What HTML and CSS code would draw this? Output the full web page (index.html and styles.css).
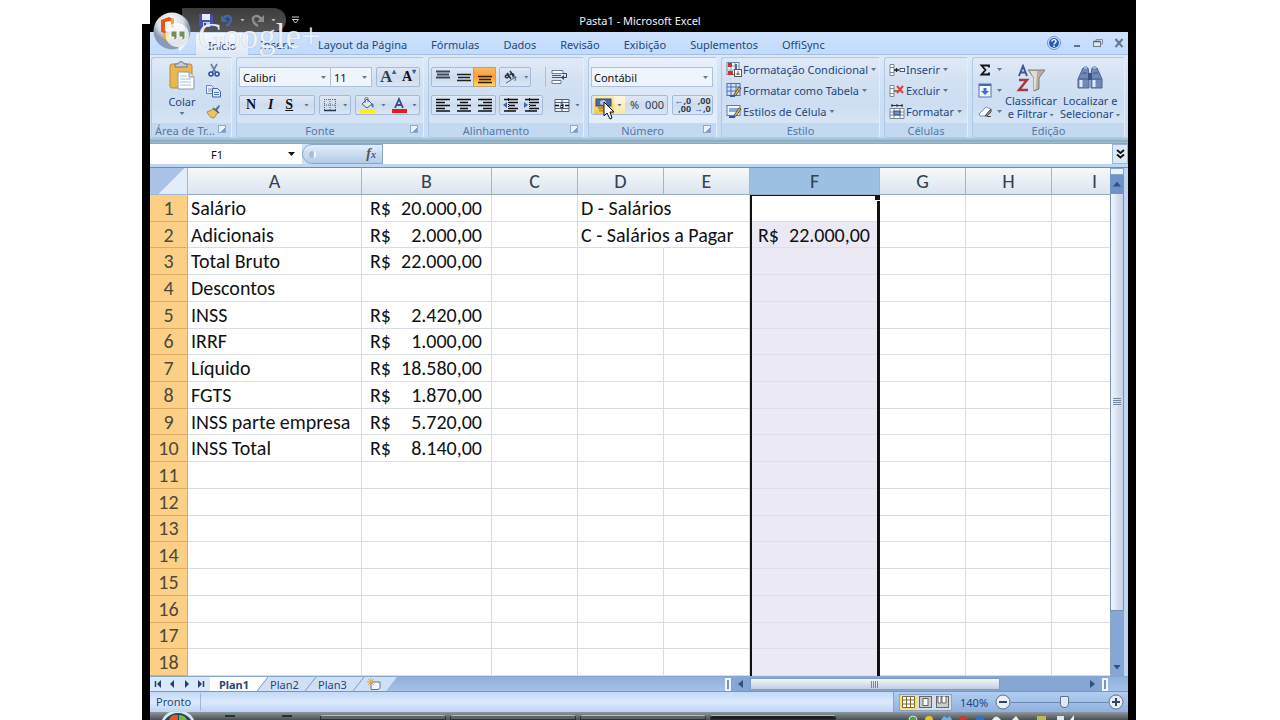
FILE: index.html
```html
<!DOCTYPE html>
<html lang="pt-BR">
<head>
<meta charset="utf-8">
<title>Pasta1 - Microsoft Excel</title>
<link rel="stylesheet" href="styles.css">
</head>
<body>
<div class="screen">
  <header class="titlebar">
    <div class="quick">
      <button class="plain" aria-label="Salvar"><svg width="16" height="16" viewBox="0 0 16 16"><path d="M1 2h12l2 2v11H1z" fill="#4b4fae"/><path d="M4 2h8v6H4z" fill="#e6eaff"/><path d="M5 10h7v5H5z" fill="#c8cdf0"/><path d="M6 11h2v3H6z" fill="#3a3d8c"/></svg></button>
      <button class="plain" aria-label="Desfazer"><svg width="16" height="16" viewBox="0 0 16 16"><path d="M4 7c3-5 9-3 8 1-.5 3-3 5-5 6" fill="none" stroke="#3f68ad" stroke-width="2.5"/><path d="M2 3v7h7z" fill="#3f68ad"/></svg></button>
      <span class="arrow pale"></span>
      <button class="plain" aria-label="Refazer"><svg width="16" height="16" viewBox="0 0 16 16"><path d="M11 7C8 2 2 4 3 8c.5 3 3 5 5 6" fill="none" stroke="#8d8d8d" stroke-width="2.5"/><path d="M14 3v7H7z" fill="#8d8d8d"/></svg></button>
      <span class="arrow pale"></span>
    </div>
    <button class="plain more" aria-label="Personalizar"><svg width="7" height="8" viewBox="0 0 7 8"><path d="M0 1h7" stroke="#ccc"/><path d="M.5 3.500h6L3.500 7z" fill="none" stroke="#ccc"/></svg></button>
    <h1 class="title">Pasta1 - Microsoft Excel</h1>
  </header>

  <button class="plain office" aria-label="Botão Office"><svg width="42" height="46" viewBox="0 0 42 46">
    <defs><radialGradient id="orb" cx=".45" cy=".25"><stop offset="0" stop-color="#fff"/><stop offset=".7" stop-color="#d7dbe3"/><stop offset="1" stop-color="#8c9bb4"/></radialGradient></defs>
    <circle cx="20" cy="20" r="18.500" fill="url(#orb)"/>
    <path d="M9 9l8-3 5 2v8l-3 1v-7l-6 1v9l5 1v3l-9-3z" fill="#e2571c"/><path d="M19 7l3 1v7h-3z" fill="#f5a03a"/><path d="M11 22h6v9l-6-4z" fill="#f0ad25"/>
    <path d="M25 12a12 12 0 0 1 12 12c0 9-6 11-9 17l-2-5a12 12 0 0 1-1-24z" fill="#fff" opacity=".75"/>
    <path d="M19 20h6v7l-3 3v-4h-3zM27 20h6v7l-3 3v-4h-3z" fill="#6f8f5b" stroke="#eef3ea"/>
  </svg></button>
  <div class="watermark">Google+</div>

  <div class="window">
    <nav class="tabs">
      <a class="tab active" href="#">Início</a><a class="tab" href="#">Inserir</a><a class="tab" href="#">Layout da Página</a><a class="tab" href="#">Fórmulas</a><a class="tab" href="#">Dados</a><a class="tab" href="#">Revisão</a><a class="tab" href="#">Exibição</a><a class="tab" href="#">Suplementos</a><a class="tab" href="#">OffiSync</a>
      <div class="winbtns">
        <button class="plain" aria-label="Ajuda"><svg width="14" height="14" viewBox="0 0 14 14"><circle cx="7" cy="7" r="6.500" fill="#dce9fb" stroke="#6b8fd0"/><circle cx="7" cy="7" r="5" fill="#2a5cc0"/><path d="M5 5.500c0-2.500 4-2.500 4 0C9 7 7 7 7 8.500M7 9.500V11" fill="none" stroke="#fff" stroke-width="1.400"/></svg></button>
        <button class="plain" aria-label="Minimizar"><svg width="10" height="10" viewBox="0 0 10 10"><path d="M2 8h6" stroke="#5f7186" stroke-width="2"/></svg></button>
        <button class="plain" aria-label="Restaurar"><svg width="10" height="10" viewBox="0 0 10 10"><path d="M3 3V1.500h6.500V6H8" fill="none" stroke="#8390a0"/><rect x=".5" y="3.500" width="7" height="5" fill="#dfe7ee" stroke="#6d7a88"/><path d="M1 3.500h6" stroke="#566" stroke-width="1.500"/></svg></button>
        <button class="plain" aria-label="Fechar"><svg width="10" height="10" viewBox="0 0 10 10"><path d="M1.500 1l7 8M8.500 1l-7 8" stroke="#66788c" stroke-width="2"/></svg></button>
      </div>
    </nav>

    <div class="ribbon">
      <section class="group g-clip">
        <div class="body clip">
          <button class="plain big">
            <svg width="28" height="30" viewBox="0 0 28 30"><rect x="2" y="3" width="22" height="24" rx="2" fill="#eab650" stroke="#b98a3b"/><path d="M7 6V3h3c0-3 6-3 6 0h3v3z" fill="#c9ced6" stroke="#70767e"/><path d="M10 11h11l5 5v12H10z" fill="#fff" stroke="#8b98a8"/><path d="M21 11v5h5" fill="#dfe6ef" stroke="#8b98a8"/><path d="M12 15h7M12 18h11M12 21h11M12 24h11" stroke="#aebccb"/></svg>
            <span>Colar</span><span class="arrow"></span>
          </button>
          <div class="stack">
            <button class="plain" aria-label="Recortar"><svg width="12" height="15" viewBox="0 0 12 15"><path d="M3 1l5 9M9 1L4 10" stroke="#687d9c" stroke-width="1.600"/><circle cx="3" cy="11" r="2" fill="none" stroke="#2c50a0" stroke-width="1.600"/><circle cx="9" cy="11" r="2" fill="none" stroke="#2c50a0" stroke-width="1.600"/></svg></button>
            <button class="plain" aria-label="Copiar"><svg width="15" height="14" viewBox="0 0 15 14"><path d="M.5 1.500h5l2 2v6h-7z" fill="#eef4fd" stroke="#6c85b3"/><path d="M2 5h4M2 7h4" stroke="#7f96bf"/><path d="M6.500 4.500h5l3 3v5.500h-8z" fill="#dfeafc" stroke="#4265a8"/><path d="M8 8.500h5M8 10.500h5" stroke="#5b7abb"/></svg></button>
            <button class="plain" aria-label="Pincel"><svg width="15" height="15" viewBox="0 0 15 15"><path d="M9 5l4-4 1 1-3 5z" fill="#5a6f94"/><path d="M1 8l7-3 4 3-4 6c-3 0-5-2-7-6z" fill="#e6c65f" stroke="#a78a3c"/><path d="M7 4l6 5" stroke="#4c5c77" stroke-width="1.500"/></svg></button>
          </div>
        </div>
        <h2 class="label">Área de Tr...<i class="launch"></i></h2>
      </section>

      <section class="group g-font">
        <div class="body">
          <div class="line">
            <div class="line tight"><select class="combo c-font" aria-label="Fonte"><option>Calibri</option></select><select class="combo c-size" aria-label="Tamanho"><option>11</option></select></div>
            <div class="set grow"><button class="serif s16" aria-label="Aumentar fonte">A<sup>▴</sup></button><button class="serif s13" aria-label="Diminuir fonte">A<sup>▾</sup></button></div>
          </div>
          <div class="line">
            <div class="set biu"><button class="serif s13">N</button><button class="serif s13"><i>I</i></button><button class="serif s13"><u>S</u></button><span class="arrow"></span></div>
            <div class="set bord"><button aria-label="Bordas"><svg width="14" height="14" viewBox="0 0 14 14"><path d="M1 1.500h12M1.500 1v12M7 1v12M12.500 1v12M1 7h12" stroke="#52647f" stroke-dasharray="1 1"/><path d="M1 12.500h12" stroke="#26374f" stroke-width="1.500"/></svg></button><span class="arrow"></span></div>
            <div class="set grow"><button aria-label="Preenchimento"><svg width="17" height="16" viewBox="0 0 17 16"><path d="M3 7l5-5 5 5-5 4z" fill="#dfe7f2" stroke="#50617e"/><path d="M6 6V2c0-2 3-2 3 0v3" fill="none" stroke="#50617e"/><path d="M12 6c3 0 3 3 2 5l-2-3z" fill="#3f72c4"/><path d="M1 12h15v4H1z" fill="#ffec1c"/></svg></button><span class="arrow"></span><button aria-label="Cor da fonte"><svg width="16" height="16" viewBox="0 0 16 16"><path d="M4 11l4-9 4 9M5.500 8h5" fill="none" stroke="#36507f" stroke-width="1.800"/><path d="M1 12h15v4H1z" fill="#e11b22"/></svg></button><span class="arrow"></span></div>
          </div>
        </div>
        <h2 class="label">Fonte<i class="launch"></i></h2>
      </section>

      <section class="group g-align">
        <div class="body">
          <div class="line">
            <div class="set three"><button aria-label="Em cima"><svg width="14" height="14" viewBox="0 0 14 14"><path d="M0 1.500h14M1 4.500h12M0 7.500h14" stroke="#3f4753" stroke-width="2"/></svg></button><button aria-label="No meio"><svg width="14" height="14" viewBox="0 0 14 14"><path d="M0 4.500h14M1 7.500h12M0 10.500h14" stroke="#222" stroke-width="1.500"/></svg></button><button class="on" aria-label="Embaixo"><svg width="14" height="14" viewBox="0 0 14 14"><path d="M0 6.500h14M1 9.500h12M0 12.500h14" stroke="#2c1d05" stroke-width="1.500"/></svg></button></div>
            <div class="set ori"><button aria-label="Orientação"><svg width="18" height="16" viewBox="0 0 18 16"><path d="M3 7l4-2M5 4l4 6M3 7c1 3 4 2 4-1M8 2l4 6M8 6c2-3 5-1 3 2" fill="none" stroke="#26303e" stroke-width="1.500"/><path d="M4 14l10-6M14 8l-4 0M14 8l-1 4" fill="none" stroke="#56657c"/></svg></button><span class="arrow"></span></div>
            <div class="aside ruled"><button class="plain" aria-label="Quebrar texto"><svg width="17" height="16" viewBox="0 0 17 16"><path d="M1 1.500h11v3H1zM1 11.500h9v3H1z" fill="#fff" stroke="#6f7d90"/><path d="M1 8.500h10M1 6.500h9" stroke="#4a5a70"/><path d="M12 4.500h3.500v4H12" fill="none" stroke="#33415a"/><path d="M10 8.500l3-2.500v5z" fill="#33415a"/></svg></button></div>
          </div>
          <div class="line">
            <div class="set three"><button aria-label="Esquerda"><svg width="14" height="14" viewBox="0 0 14 14"><path d="M0 1.500h14M0 4.500h9M0 7.500h14M0 10.500h9M0 13h14" stroke="#111" stroke-width="1.500"/></svg></button><button aria-label="Centro"><svg width="14" height="14" viewBox="0 0 14 14"><path d="M0 1.500h14M3 4.500h8M0 7.500h14M3 10.500h8M0 13h14" stroke="#111" stroke-width="1.500"/></svg></button><button aria-label="Direita"><svg width="14" height="14" viewBox="0 0 14 14"><path d="M0 1.500h14M5 4.500h9M0 7.500h14M5 10.500h9M0 13h14" stroke="#111" stroke-width="1.500"/></svg></button></div>
            <div class="set ind"><button aria-label="Diminuir recuo"><svg width="15" height="14" viewBox="0 0 15 14"><path d="M1 1.500h14M6 4.500h9M6 7.500h6M6 10.500h9M1 13h12" stroke="#111" stroke-width="1.500"/><path d="M0 7l4-3v6z" fill="#4365b4"/><path d="M5.500 0v14" stroke="#111" stroke-dasharray="1 1"/></svg></button><button aria-label="Aumentar recuo"><svg width="15" height="14" viewBox="0 0 15 14"><path d="M1 1.500h14M6 4.500h9M6 7.500h6M6 10.500h9M1 13h12" stroke="#111" stroke-width="1.500"/><path d="M4 7L0 4v6z" fill="#4365b4"/><path d="M5.500 0v14" stroke="#111" stroke-dasharray="1 1"/></svg></button></div>
            <div class="aside"><button class="plain" aria-label="Mesclar"><svg width="16" height="15" viewBox="0 0 16 15"><path d="M1 1.500h14v12H1zM8 1v3M8 11v3M1 4.500h14M1 10.500h14" fill="#eef3fa" stroke="#536178"/><path d="M1 7.500h4M11 7.500h4" stroke="#111" stroke-width="1.500"/><path d="M6.500 6h2.500v3.500H7c-1 0-1-2 0-2h2" fill="none" stroke="#111"/></svg></button><span class="arrow"></span></div>
          </div>
        </div>
        <h2 class="label">Alinhamento<i class="launch"></i></h2>
      </section>

      <section class="group g-num lit">
        <div class="body">
          <div class="line"><select class="combo c-num" aria-label="Formato de número"><option>Contábil</option></select></div>
          <div class="line">
            <div class="set num"><div class="hotpair"><button class="hot" aria-label="Formato de contabilização"><svg width="17" height="15" viewBox="0 0 17 15"><rect x="1" y="1" width="15" height="7" fill="#50699b" stroke="#2f4679"/><ellipse cx="8" cy="4.500" rx="3" ry="2.500" fill="#b7c8e6"/><path d="M3 10h6M4 12.500h6" stroke="#c79216" stroke-width="2"/></svg></button><span class="arrow"></span></div><button>%</button><button>000</button></div>
            <div class="set grow"><button aria-label="Aumentar casas"><span class="dec"><b>←</b>,0<br>,00</span></button><button aria-label="Diminuir casas"><span class="dec">,00<br><b>→</b>,0</span></button></div>
          </div>
        </div>
        <h2 class="label">Número<i class="launch"></i></h2>
      </section>

      <section class="group g-style">
        <div class="body list">
          <button class="plain item"><svg width="16" height="15" viewBox="0 0 16 15"><rect x="1" y=".5" width="12" height="12" fill="#fff" stroke="#74849c"/><path d="M1 4h12M1 8h12M5 1v11M9 1v11" stroke="#8fa0b8"/><path d="M2 1h4v4H2zM2 9h5v4H2z" fill="#c4333b"/><path d="M9 2h2v7H9z" fill="#4d6fb5"/><rect x="8.500" y="7.500" width="7" height="7" fill="#fff" stroke="#555"/><path d="M10 12h4M12 9v4" stroke="#555"/></svg>Formatação Condicional<span class="arrow"></span></button>
          <button class="plain item"><svg width="16" height="15" viewBox="0 0 16 15"><rect x="1" y=".5" width="13" height="12" fill="#cfe0fa" stroke="#4e6fae"/><path d="M1 4h13M1 8h13M5 1v11M10 1v11" stroke="#4e6fae"/><path d="M13 4l2 1-5 7-3 1z" fill="#e4c14a" stroke="#5a5330"/><path d="M4 12h5v2H4z" fill="#3558a8"/></svg>Formatar como Tabela<span class="arrow"></span></button>
          <button class="plain item"><svg width="16" height="15" viewBox="0 0 16 15"><rect x="1" y="1.500" width="13" height="10" fill="#eef4fe" stroke="#5c79b0"/><path d="M3 4h9v4H3z" fill="#8aaadf"/><path d="M13 4l2 1-5 7-3 1z" fill="#e4c14a" stroke="#5a5330"/><path d="M3 12h6v2H3z" fill="#3558a8"/></svg>Estilos de Célula<span class="arrow"></span></button>
        </div>
        <h2 class="label">Estilo</h2>
      </section>

      <section class="group g-cells">
        <div class="body list">
          <button class="plain item"><svg width="16" height="14" viewBox="0 0 16 14"><path d="M1 1.500h4v3H1zM1 9.500h4v3H1z" fill="#fff" stroke="#7c8796"/><path d="M1 4.500h4v5H1z" fill="#fff" stroke="#7c8796"/><path d="M5 7h5M7.500 5v4" stroke="#222" stroke-width="1.300"/><rect x="11" y="5.500" width="4.500" height="3" fill="#fff" stroke="#435d94"/></svg>Inserir<span class="arrow"></span></button>
          <button class="plain item"><svg width="16" height="14" viewBox="0 0 16 14"><path d="M1 1.500h4v3H1zM1 9.500h4v3H1zM1 4.500h4v5H1z" fill="#fff" stroke="#7c8796"/><path d="M5 7h4" stroke="#222"/><path d="M8 2l6 7M14 2L8 9" stroke="#dc4330" stroke-width="2"/></svg>Excluir<span class="arrow"></span></button>
          <button class="plain item"><svg width="16" height="15" viewBox="0 0 16 15"><path d="M2 1.500h12M3 0v3M8 0v3M13 0v3" stroke="#333"/><path d="M1 4.500h14v10H1zM1 8h14M1 11h14M5 4v10M11 4v10" fill="#fff" stroke="#7c8796"/><rect x="5" y="7" width="6" height="4" fill="#7590c4" stroke="#334f86"/></svg>Formatar<span class="arrow"></span></button>
        </div>
        <h2 class="label">Células</h2>
      </section>

      <section class="group g-edit">
        <div class="body edit">
          <div class="mini">
            <button class="plain item" aria-label="Soma"><svg width="14" height="14" viewBox="0 0 14 14"><path d="M11 4.500V2.500H3.500L7.500 7l-4 4.500H11V9.500" fill="none" stroke="#111" stroke-width="1.800"/></svg><span class="arrow"></span></button>
            <button class="plain item" aria-label="Preencher"><svg width="14" height="15" viewBox="0 0 14 15"><rect x="1" y="1" width="12" height="13" fill="#f4f8ff" stroke="#5373b3"/><path d="M1 2h12" stroke="#4669b4" stroke-width="2"/><path d="M5.500 5h3v3H11l-4 4-4-4h2.500z" fill="#3f6fd0"/></svg><span class="arrow"></span></button>
            <button class="plain item" aria-label="Limpar"><svg width="14" height="13" viewBox="0 0 14 13"><path d="M1 9l7-7 5 2-6 7H2z" fill="#fafcff" stroke="#8090a8"/><path d="M7 11l6-7v3l-4 4zM9 11.500h4" fill="#98a4b5" stroke="#444"/></svg><span class="arrow"></span></button>
          </div>
          <button class="plain big wide"><svg width="30" height="28" viewBox="0 0 30 28"><path d="M12 6h17l-6 8v11l-5 2V14z" fill="#b5aea2" stroke="#817d77"/><path d="M14 7h7l-1 18-2 1V14z" fill="#e0ddd6"/><path d="M3 12L7 2l4 10M4.500 8.500h5" fill="none" stroke="#405a8c" stroke-width="2"/><path d="M3 16h8L3 26h9" fill="none" stroke="#a53b40" stroke-width="2.500"/></svg><span>Classificar<br>e Filtrar<i class="arrow"></i></span></button>
          <button class="plain big wide"><svg width="28" height="28" viewBox="0 0 28 28"><path d="M7 4h5l1 6v14H2V15z" fill="#7089b5" stroke="#4b6290"/><path d="M16 4h5l5 11v9H15V10z" fill="#7089b5" stroke="#4b6290"/><path d="M12 9h4v7h-4z" fill="#3d5380"/><path d="M8 2h3v3H8zM17 2h3v3h-3z" fill="#9cb0d2"/><path d="M5 16v7M18 16v7" stroke="#dfe9f8" stroke-width="3"/><path d="M6 9h5M17 9h5M3 15h9M16 15h9" stroke="#425987"/></svg><span>Localizar e<br>Selecionar<i class="arrow"></i></span></button>
        </div>
        <h2 class="label">Edição</h2>
      </section>
    </div>

    <div class="formula">
      <label class="namebox"><input class="name" value="F1" aria-label="Caixa de nome"><span class="arrow black"></span></label>
      <div class="fx"><i class="knob"></i><b>f<small>x</small></b></div>
      <input class="fbar" value="" aria-label="Barra de fórmulas">
      <button class="expand" aria-label="Expandir"><svg width="9" height="10" viewBox="0 0 9 10"><path d="M1 1l3.500 3L8 1M1 5.500l3.500 3L8 5.500" fill="none" stroke="#111" stroke-width="1.800"/></svg></button>
    </div>

    <div class="work">
      <div class="sheet">
        <table class="grid">
          <colgroup><col class="w-head"><col class="w-a"><col class="w-b"><col class="w-n"><col class="w-n"><col class="w-n"><col class="w-b"><col class="w-n"><col class="w-n"><col class="w-n"></colgroup>
          <thead><tr><th class="corner"></th><th>A</th><th>B</th><th>C</th><th>D</th><th>E</th><th class="picked">F</th><th>G</th><th>H</th><th>I</th></tr></thead>
          <tbody>
            <tr><th>1</th><td>Salário</td><td><div class="cash"><span>R$</span><span>20.000,00</span></div></td><td></td><td class="spill">D - Salários</td><td></td><td class="sel first"><i class="handle"></i></td><td></td><td></td><td></td></tr>
            <tr><th>2</th><td>Adicionais</td><td><div class="cash"><span>R$</span><span>2.000,00</span></div></td><td></td><td class="spill">C - Salários a Pagar</td><td></td><td class="sel"><div class="cash"><span>R$</span><span>22.000,00</span></div></td><td></td><td></td><td></td></tr>
            <tr><th>3</th><td>Total Bruto</td><td><div class="cash"><span>R$</span><span>22.000,00</span></div></td><td></td><td></td><td></td><td class="sel"></td><td></td><td></td><td></td></tr>
            <tr><th>4</th><td>Descontos</td><td></td><td></td><td></td><td></td><td class="sel"></td><td></td><td></td><td></td></tr>
            <tr><th>5</th><td>INSS</td><td><div class="cash"><span>R$</span><span>2.420,00</span></div></td><td></td><td></td><td></td><td class="sel"></td><td></td><td></td><td></td></tr>
            <tr><th>6</th><td>IRRF</td><td><div class="cash"><span>R$</span><span>1.000,00</span></div></td><td></td><td></td><td></td><td class="sel"></td><td></td><td></td><td></td></tr>
            <tr><th>7</th><td>Líquido</td><td><div class="cash"><span>R$</span><span>18.580,00</span></div></td><td></td><td></td><td></td><td class="sel"></td><td></td><td></td><td></td></tr>
            <tr><th>8</th><td>FGTS</td><td><div class="cash"><span>R$</span><span>1.870,00</span></div></td><td></td><td></td><td></td><td class="sel"></td><td></td><td></td><td></td></tr>
            <tr><th>9</th><td>INSS parte empresa</td><td><div class="cash"><span>R$</span><span>5.720,00</span></div></td><td></td><td></td><td></td><td class="sel"></td><td></td><td></td><td></td></tr>
            <tr><th>10</th><td>INSS Total</td><td><div class="cash"><span>R$</span><span>8.140,00</span></div></td><td></td><td></td><td></td><td class="sel"></td><td></td><td></td><td></td></tr>
            <tr><th>11</th><td></td><td></td><td></td><td></td><td></td><td class="sel"></td><td></td><td></td><td></td></tr>
            <tr><th>12</th><td></td><td></td><td></td><td></td><td></td><td class="sel"></td><td></td><td></td><td></td></tr>
            <tr><th>13</th><td></td><td></td><td></td><td></td><td></td><td class="sel"></td><td></td><td></td><td></td></tr>
            <tr><th>14</th><td></td><td></td><td></td><td></td><td></td><td class="sel"></td><td></td><td></td><td></td></tr>
            <tr><th>15</th><td></td><td></td><td></td><td></td><td></td><td class="sel"></td><td></td><td></td><td></td></tr>
            <tr><th>16</th><td></td><td></td><td></td><td></td><td></td><td class="sel"></td><td></td><td></td><td></td></tr>
            <tr><th>17</th><td></td><td></td><td></td><td></td><td></td><td class="sel"></td><td></td><td></td><td></td></tr>
            <tr><th>18</th><td></td><td></td><td></td><td></td><td></td><td class="sel"></td><td></td><td></td><td></td></tr>
          </tbody>
        </table>
      </div>
      <div class="vscroll"><i class="split"></i><button class="sbtn" aria-label="Subir"><i class="up"></i></button><div class="vthumb"><i class="grip"></i></div><div class="vspace"></div><button class="sbtn clear" aria-label="Descer"><i class="down"></i></button></div>
    </div>

    <div class="bottom">
      <div class="navs">
        <button class="plain" aria-label="Primeira"><svg width="8" height="8" viewBox="0 0 8 8"><path d="M1.500 1v6" stroke="#24406f" stroke-width="1.500"/><path d="M7 0v8L3 4z" fill="#24406f"/></svg></button>
        <button class="plain" aria-label="Anterior"><svg width="8" height="8" viewBox="0 0 8 8"><path d="M6 0v8L2 4z" fill="#24406f"/></svg></button>
        <button class="plain" aria-label="Próxima"><svg width="8" height="8" viewBox="0 0 8 8"><path d="M2 0v8l4-4z" fill="#24406f"/></svg></button>
        <button class="plain" aria-label="Última"><svg width="8" height="8" viewBox="0 0 8 8"><path d="M6.500 1v6" stroke="#24406f" stroke-width="1.500"/><path d="M1 0v8l4-4z" fill="#24406f"/></svg></button>
      </div>
      <button class="plan cur">Plan1</button><svg width="13" height="14" viewBox="0 0 13 14"><path d="M0 0h13L2 14H0z" fill="#fff"/><path d="M13 0v14H2z" fill="#cfe0f6"/><path d="M13 0L2 14" stroke="#7b98c0"/></svg><button class="plan">Plan2</button><svg width="13" height="14" viewBox="0 0 13 14"><path d="M0 0h13v14H0z" fill="#cfe0f6"/><path d="M13 0L2 14" stroke="#7b98c0"/></svg><button class="plan">Plan3</button><svg width="13" height="14" viewBox="0 0 13 14"><path d="M0 0h13v14H0z" fill="#cfe0f6"/><path d="M13 0L2 14" stroke="#7b98c0"/></svg><button class="plan new" aria-label="Inserir planilha"><svg width="15" height="12" viewBox="0 0 15 12"><path d="M4 4h9v6l-2 1.500H4z" fill="#f3f7fd" stroke="#5d7398"/><path d="M4 0v8M0 4h8M1 1l6 6M7 1L1 7" stroke="#e0a633"/></svg></button><svg width="13" height="14" viewBox="0 0 13 14"><path d="M0 0h13L2 14H0z" fill="#cfe0f6"/></svg>
      <div class="hscroll"><i class="bar"></i><i class="left"></i><div class="hthumb"><i class="grip h"></i></div><div class="hspace"></div><i class="right"></i><i class="bar"></i></div>
    </div>

    <footer class="status">
      <span class="ready">Pronto</span>
      <div class="tools">
        <div class="views">
          <button class="plain v on" aria-label="Normal"><svg width="13" height="12" viewBox="0 0 13 12"><path d="M.5.500h12v11H.5zM.5 4h12M.5 8h12M4.500.500v11M8.500.500v11" fill="#fff" stroke="#7d6a35"/></svg></button>
          <button class="plain v" aria-label="Layout"><svg width="13" height="12" viewBox="0 0 13 12"><rect x=".5" y=".5" width="12" height="11" fill="#ccc" stroke="#666"/><rect x="4" y="2.500" width="5" height="7" fill="#fff" stroke="#666"/></svg></button>
          <button class="plain v" aria-label="Quebra"><svg width="13" height="12" viewBox="0 0 13 12"><rect x=".5" y=".5" width="12" height="11" fill="#ccc" stroke="#666"/><path d="M2 0h3v7H2zM6 0h4v7H6z" fill="#fff" stroke="#666"/></svg></button>
        </div>
        <span class="pct">140%</span>
        <button class="plain" aria-label="Reduzir"><svg width="16" height="16" viewBox="0 0 16 16"><circle cx="8" cy="8" r="7" fill="#e8eef5" stroke="#5d7087"/><path d="M4 8h8" stroke="#34465c" stroke-width="2"/></svg></button>
        <input class="zoom" type="range" min="0" max="100" value="56" aria-label="Zoom">
        <button class="plain" aria-label="Ampliar"><svg width="16" height="16" viewBox="0 0 16 16"><circle cx="8" cy="8" r="7" fill="#e8eef5" stroke="#5d7087"/><path d="M4 8h8M8 4v8" stroke="#34465c" stroke-width="2"/></svg></button>
      </div>
    </footer>
  </div>

  <svg class="cursor" width="12" height="19" viewBox="0 0 12 19"><path d="M1 1v14l3-3 3 6 2-1-2-6h4z" fill="#fff" stroke="#111"/></svg>

  <div class="taskbar">
    <svg class="start" width="38" height="8" viewBox="0 0 38 8"><circle cx="19" cy="16" r="18" fill="#dfe6e8"/><circle cx="19" cy="17" r="16" fill="#1c4a66"/><path d="M10 8q2-6 9-5v5z" fill="#e2542b"/><path d="M20 3q6 0 8 5h-8z" fill="#7fb53d"/></svg>
    <div class="pins"><i></i><i></i></div>
    <div class="task"></div><div class="task"></div><div class="task"></div><div class="task dark"></div>
    <svg class="tray" width="230" height="8" viewBox="0 0 230 8"><circle cx="15" cy="8" r="4" fill="#49a64b" stroke="#ddd"/><circle cx="31" cy="8" r="4" fill="#e6c22f"/><path d="M43 8l3-4 3 2 3-2 2 4z" fill="#68b2e4"/><circle cx="65" cy="8" r="4" fill="#c23b33"/><circle cx="82" cy="8" r="4" fill="#2675c1"/><path d="M94 8q4-7 9 0zM114 8l4-4 3 4zM172 8l4-5v5z" fill="#eee"/><path d="M159 4h7v4h-7z" fill="#dceaf0"/><path d="M139 4h9v4h-9z" fill="#beb75b"/></svg>
  </div>
</div>
</body>
</html>
```
FILE: styles.css
```css
* { box-sizing: border-box; }
body { margin: 0; background: #fff; font-family: "Noto Sans", "Open Sans", sans-serif; font-size: 11px; color: #1e395b; }
button, input, select { font: inherit; color: inherit; margin: 0; }
svg { display: block; flex: none; }
.plain { border: 0; background: none; padding: 0; }

.screen { position: relative; min-height: 100vh; margin: 0 144px 0 142px; padding: 0 8px; background: #000; display: flex; flex-direction: column; }
.screen::before { content: ""; position: absolute; left: 0; top: 0; width: 8px; height: 24px; background: #fff; }

.titlebar { height: 32px; display: flex; align-items: flex-end; position: relative; }
.quick { height: 24px; margin-left: 32px; width: 104px; padding: 0 10px 0 16px; display: flex; align-items: center; justify-content: space-between; background: linear-gradient(#3c3c3c, #555); border-radius: 0 12px 12px 0; }
.more { height: 24px; margin-left: 6px; display: flex; align-items: center; }
.title { position: absolute; left: 0; right: 0; top: 13px; margin: 0; padding-left: 2px; text-align: center; font-size: 11px; line-height: 16px; font-weight: 400; color: #f2f2f2; }
.office { position: absolute; left: 10px; top: 11px; z-index: 2; }
.watermark { position: absolute; left: 56px; top: 16px; z-index: 2; font: 35px/42px "Liberation Serif", serif; color: rgba(255, 255, 255, .85); text-shadow: 0 0 1px rgba(110, 130, 160, .6); pointer-events: none; }
.cursor { position: absolute; left: 461px; top: 101px; z-index: 3; }

.window { flex: 1; display: flex; flex-direction: column; background: #bfd6f3; min-width: 0; }
.tabs { height: 23px; display: flex; align-items: flex-end; padding: 0 4px 0 46px; background: linear-gradient(#cfe1fb, #bfdbff); border-bottom: 1px solid #a4bfe3; }
.tab { padding: 0 12px; height: 22px; line-height: 25px; color: #24477c; text-decoration: none; white-space: nowrap; }
.tab.active { margin-bottom: -1px; background: linear-gradient(#f4f9ff, #dfe9f5); border-radius: 3px 3px 0 0; box-shadow: 0 0 1px #8fb0dc; }
.winbtns { margin-left: auto; display: flex; gap: 11px; align-items: center; height: 22px; }

.ribbon { height: 88px; padding: 2px 3px 0 1px; display: flex; gap: 4px; background: linear-gradient(#dce9f8, #cbdff5 50%, #c3def7 93%, #88a8b9 98%, #a8c8dc); }
.group { height: 81px; display: flex; flex-direction: column; border: 1px solid #afc8e4; border-right-color: #e2eefa; border-radius: 3px; background: linear-gradient(#dfeaf7, #d2e1f2 30%, #cddef2 60%, #dcebfa); overflow: hidden; flex: none; }
.lit { background: linear-gradient(#e8f1fb, #dbe8f7 40%, #e5f2fd); }
.g-clip { width: 81px; } .g-font { width: 188px; } .g-align { width: 156px; } .g-num { width: 129px; } .g-style { width: 159px; } .g-cells { width: 84px; } .g-edit { flex: 1; }
.body { flex: 1; min-height: 0; padding: 9px 3px 0 2px; display: flex; flex-direction: column; gap: 8px; }
.label { position: relative; height: 14px; margin: 0; font-size: 11px; font-weight: 400; line-height: 15px; text-align: center; color: #5577a6; background: #c2d9f1; white-space: nowrap; }
.g-clip .label { text-align: left; padding-left: 3px; }
.g-font .label, .g-align .label, .g-num .label { padding-right: 20px; }
.launch { position: absolute; right: 5px; top: 2px; width: 8px; height: 8px; border: 1px solid #8fa9cb; background: linear-gradient(135deg, #eaf3fc 60%, #7f9cc2 60%); }

.line { display: flex; gap: 4px; height: 20px; }
.tight { gap: 0; }
.set { display: flex; align-items: center; justify-content: space-around; height: 20px; border: 1px solid #a4bad8; border-radius: 2px; background: linear-gradient(#dfe9f5, #cddcee 50%, #d8e6f5); }
.set button { border: 0; background: none; padding: 0 1px; height: 18px; display: flex; align-items: center; justify-content: center; line-height: 18px; color: #333e4f; }
.grow { flex: 1; }
.biu { width: 76px; } .bord { width: 32px; } .three { width: 65px; } .ori { width: 32px; } .ind { width: 44px; } .num { width: 77px; }
.g-align .line { gap: 3px; }
.three button { flex: 1; }
.set .on { background: linear-gradient(#fbb668, #ff9d2e 50%, #ffd96c); box-shadow: 0 0 0 1px #c3a068; }
.hotpair { display: flex; align-items: center; gap: 3px; height: 18px; padding-right: 3px; background: linear-gradient(#fdf6dc, #fbe7a3); }
.set .hot { background: linear-gradient(#fdeeb4, #f8c645); width: 20px; }
.serif { font-family: "Liberation Serif", serif; font-weight: 700; }
.set .s16 { font-size: 17px; } .set .s13 { font-size: 14px; color: #111; }
.serif sup { font-size: 8px; line-height: 8px; align-self: flex-start; color: #3b5f9f; }
.aside { margin-left: 3px; padding-left: 5px; display: flex; gap: 5px; align-items: center; }
.ruled { margin-left: 11px; border-left: 1px solid #a9bfdb; }
.dec { font-size: 9px; line-height: 8px; font-weight: 700; text-align: right; color: #354052; }
.dec b { color: #3560b5; }
.combo { appearance: none; height: 20px; border: 1px solid #abc1de; border-radius: 0; padding: 0 3px; color: #111; background: #eef5fc url("data:image/svg+xml,%3Csvg xmlns='http://www.w3.org/2000/svg' width='5' height='3'%3E%3Cpath d='M0 0h5L2.5 3z' fill='%23667a94'/%3E%3C/svg%3E") no-repeat right 4px center; }
.c-font { width: 92px; } .c-size { width: 41px; border-left: 0; } .c-num { flex: 1; padding-left: 2px; }

.arrow { display: inline-block; flex: none; width: 5px; height: 3px; background: #5f7796; clip-path: polygon(0 0, 100% 0, 50% 100%); }
.arrow.pale { background: #bbb; }
.arrow.black { background: #111; width: 7px; height: 4px; }
.clip { flex-direction: row; gap: 10px; padding: 3px 8px 0 16px; }
.big { display: flex; flex-direction: column; align-items: center; gap: 3px; line-height: 15px; color: #24477c; white-space: nowrap; align-self: flex-start; }
.stack { display: flex; flex-direction: column; gap: 6px; align-items: center; padding-top: 2px; }
.list { padding: 1px 3px 0 4px; gap: 0; }
.item { display: flex; align-items: center; gap: 1px; height: 21px; color: #24477c; white-space: nowrap; }
.item .arrow { margin-left: 2px; }
.edit { flex-direction: row; padding: 1px 2px 0 5px; gap: 3px; }
.mini { display: flex; flex-direction: column; }
.mini .arrow { margin-left: 4px; }
.wide { gap: 2px; line-height: 13px; padding-top: 5px; }
.wide .arrow { margin-left: 2px; vertical-align: middle; }

.formula { height: 21px; display: flex; background: #cfe3f6; border-top: 1px solid #8aa7bd; }
.namebox { width: 152px; background: #fff; display: flex; align-items: center; padding-right: 7px; }
.name { flex: 1; min-width: 0; border: 0; background: none; text-align: center; padding: 0 4px 0 0; color: #111; height: 20px; }
.fx { width: 81px; display: flex; align-items: center; justify-content: space-between; padding: 0 6px; background: linear-gradient(#e3eefa, #b2cbea); border: 1px solid #8ba7c8; border-radius: 10px 0 0 10px; }
.fx b { font: italic 700 14px/16px "Liberation Serif", serif; color: #4c5562; }
.fx small { font-size: 10px; }
.knob { width: 7px; height: 7px; border-radius: 50%; background: #a9bed6; border-right: 2px solid #f4f9ff; }
.fbar { flex: 1; min-width: 0; border: 0; border-radius: 0; background: #fff; padding: 0 4px; }
.expand { width: 16px; border: 1px solid #9cb4cf; background: #dce9f7; padding: 0; display: flex; align-items: center; justify-content: center; }

.work { flex: 1; display: flex; margin-top: 3px; padding-right: 4px; min-height: 0; border-top: 1px solid #6d8fb0; }
.sheet { flex: 1; min-width: 0; overflow: hidden; background: #fff; }
.grid { table-layout: fixed; width: 988px; height: 508px; border-collapse: separate; border-spacing: 0; font: 20px/22px Carlito, Lato, sans-serif; color: #111; }
.w-head { width: 38px; } .w-a { width: 174px; } .w-b { width: 130px; } .w-n { width: 86px; }
.grid th { padding: 0; font-weight: 400; }
.grid thead th { height: 27px; border-right: 1px solid #a5b3c4; border-bottom: 1px solid #9aaabe; background: linear-gradient(#f6f9fc, #dce4ee); color: #33434f; }
.grid thead .picked { background: #9bc0e2; }
.grid thead .corner { background: linear-gradient(135deg, #a9c3e8 55%, #e3edf9 55%); border-color: #9fb8d8; }
.grid tbody th { background: #fccf86; border-right: 1px solid #e0a85c; border-bottom: 1px solid #dfab63; color: #4d4a38; }
.grid td { padding: 0 3px; border-right: 1px solid #d9dce2; border-bottom: 1px solid #d9dce2; white-space: nowrap; }
.grid .spill { border-right-color: transparent; position: relative; }
.cash { display: flex; justify-content: space-between; padding: 0 6px 0 5px; }
.grid .sel { position: relative; background: #eae9f4; border: 0 solid #111; border-width: 0 3px 0 2px; box-shadow: inset 0 -1px #dfdfea; }
.sel .cash { padding: 0 4px 0 3px; }
.grid .first { background: #fff; border-top-width: 1px; }
.handle { position: absolute; right: -3px; top: 0; width: 5px; height: 5px; background: #111; border-bottom: 1px solid #fff; }

.vscroll { width: 14px; display: flex; flex-direction: column; background: #86a7d6; }
.split { height: 7px; background: #eaf6ff; border: 1px solid #88a5cc; }
.sbtn { height: 18px; border: 0; padding: 0; background: #6d93c8; display: flex; align-items: center; justify-content: center; }
.clear { background: none; }
.up, .down, .left, .right { width: 8px; height: 5px; background: #34507d; flex: none; }
.up { clip-path: polygon(50% 0, 100% 100%, 0 100%); }
.down { clip-path: polygon(0 0, 100% 0, 50% 100%); }
.left, .right { width: 5px; height: 8px; }
.left { clip-path: polygon(100% 0, 100% 100%, 0 50%); }
.right { clip-path: polygon(0 0, 100% 50%, 0 100%); }
.vthumb { flex: 70 1 0; border: 1px solid #7391bd; border-radius: 1px; background: linear-gradient(90deg, #f1f6fc, #c1d0e3); display: flex; align-items: center; justify-content: center; }
.vspace { flex: 8 1 0; }
.grip { width: 8px; height: 7px; background: repeating-linear-gradient(#7388a5 0 1px, transparent 1px 2px); }
.grip.h { background: repeating-linear-gradient(90deg, #7388a5 0 1px, transparent 1px 2px); }

.bottom { height: 16px; display: flex; background: linear-gradient(#8fb0dd, #a5c0e6); border-top: 1px solid #88a7cf; padding-right: 20px; border-bottom: 1px solid #7795bd; }
.navs { width: 60px; padding: 0 5px 0 4px; display: flex; align-items: center; justify-content: space-between; background: #d9e8fa; }
.plan { border: 0; padding: 0 2px 0 0; width: 35px; height: 14px; line-height: 15px; text-align: center; color: #24477c; background: #cfe0f6; white-space: nowrap; }
.plan.cur { width: 45px; padding: 0 0 0 3px; font-weight: 700; background: #fff; }
.plan.new { width: 20px; padding: 0; display: flex; align-items: center; justify-content: center; }
.hscroll { width: 383px; margin-left: auto; display: flex; align-items: center; gap: 7px; background: #86a6d3; }
.bar { width: 6px; height: 13px; border: 2px solid #eef6ff; background: #7b93b5; flex: none; }
.hthumb { flex: 250 1 0; height: 12px; background: linear-gradient(#f2f6fb, #c2cedd); border: 1px solid #7f9bc4; display: flex; align-items: center; justify-content: center; }
.hspace { flex: 76 1 0; }

.status { height: 20px; display: flex; align-items: center; justify-content: space-between; background: linear-gradient(#c2d9f7, #dbe9fc 50%, #bcd4f3); color: #24477c; }
.ready { width: 51px; padding-left: 6px; border-right: 1px solid #9bb7db; line-height: 18px; }
.tools { height: 20px; padding: 0 4px 0 5px; display: flex; align-items: center; background: linear-gradient(#b3cdf0, #8fb1e0); border-left: 1px solid #87a6cf; }
.views { display: flex; height: 17px; border: 1px solid #8aa4c9; background: #d3dfed; margin-right: 8px; }
.v { width: 17px; display: flex; align-items: center; justify-content: center; }
.v.on { background: #fbdc81; }
.pct { width: 35px; }
.zoom { appearance: none; width: 97px; height: 14px; background: linear-gradient(#6d88ad, #6d88ad) center / 100% 1px no-repeat; }
.zoom::-webkit-slider-thumb { appearance: none; width: 9px; height: 12px; background: #dfe9f5; border: 1px solid #5d7087; border-radius: 1px 1px 4px 4px; }

.taskbar { height: 8px; display: flex; gap: 4px; background: linear-gradient(#8e979d, #4a5054); overflow: hidden; }
.start { margin-left: 9px; }
.pins { width: 115px; display: flex; justify-content: space-around; align-items: center; }
.pins i { width: 10px; height: 2px; background: #2b2f32; }
.task { width: 126px; margin-top: 3px; background: #5d6468; border: 1px solid #2c3033; border-top-color: #b6bcc0; border-radius: 3px 3px 0 0; }
.task.dark { background: #1b1e20; }
.tray { margin-left: auto; }
```
